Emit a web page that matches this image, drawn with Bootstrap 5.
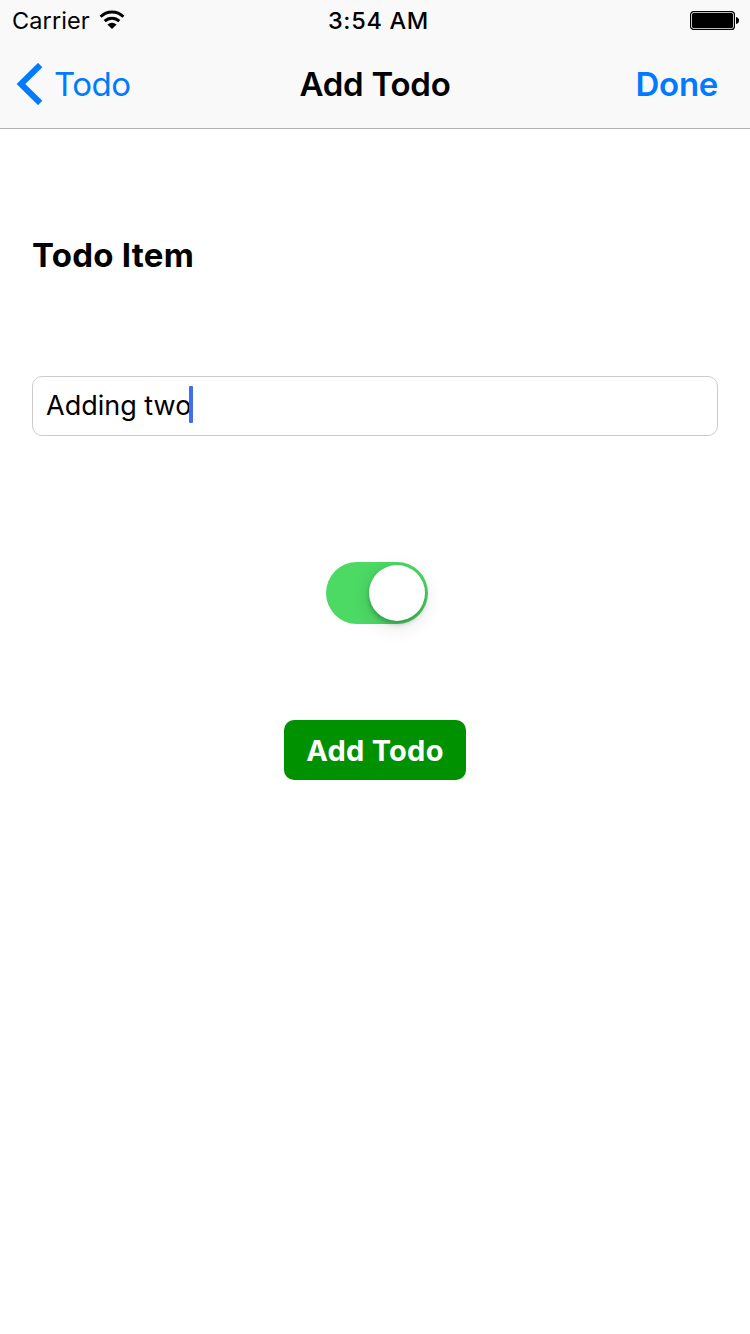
<!DOCTYPE html>
<html lang="en">
<head>
<meta charset="utf-8">
<meta name="viewport" content="width=device-width, initial-scale=1">
<title>Add Todo</title>
<link rel="stylesheet" href="https://cdn.jsdelivr.net/npm/bootstrap@5.3.0/dist/css/bootstrap.min.css">
<style>
body{font-family:Inter,"Liberation Sans",sans-serif;color:#000;background:#fff;line-height:1;min-height:1334px}
.top-area{height:129px;background:#f9f9f9;border-bottom:1px solid #b2b2b2}
.status-bar{height:40px;font-size:23.5px;padding:0 11px 0 12px}
.status-bar>*,.title-bar>*{flex:1 1 0;white-space:nowrap}
.carrier{letter-spacing:.1px;padding-top:2px}
.clock{font-weight:500;letter-spacing:.7px;padding:2px 0 0 6px}
.wifi{margin-left:9px}
.title-bar{height:88px;font-size:33px;padding:0 32px 0 16px}
.ios-link{color:#007aff;text-decoration:none}
.back-label{margin-left:11px;letter-spacing:-.5px}
.screen-title{font-size:33px;font-weight:600;letter-spacing:-.25px;padding:2px 0 0 16px}
.done{font-weight:600;letter-spacing:-.3px}
.content{padding:106px 32px 0}
.item-label{font-size:33px;line-height:40px;font-weight:700;margin:0 0 101px;letter-spacing:.25px}
.todo-input{height:60px;border:1px solid #ccc;border-radius:10px;padding:0 13px;font-size:27px;color:#000}
.caret{width:4px;height:37px;border-radius:1px;background:#416ced;margin-left:-2px;margin-top:-3px}
.ios-switch{width:102px;height:62px;border-radius:31px;background:#4cd964;padding:3px;margin:126px 0 96px 4px}
.knob{width:56px;height:56px;border-radius:50%;background:#fff;box-shadow:0 3px 5px rgba(0,0,0,.24),0 5px 20px rgba(0,0,0,.12)}
.add-btn{width:182px;height:60px;border-radius:10px;background:#009100!important;color:#fff!important;font-size:29px;font-weight:700;padding:1px 0 0;border:0;line-height:60px;letter-spacing:.25px}
</style>
</head>
<body>
<header class="top-area">
  <div class="status-bar d-flex align-items-center">
    <div class="d-flex align-items-center"><span class="carrier">Carrier</span>
      <svg class="wifi" width="26" height="20" viewBox="0 0 26 20"><g fill="none" stroke="#000" stroke-width="3"><path d="M1.600 6.800A16.200 16.200 0 0 1 24.400 6.800"/><path d="M5.700 11.100A10.500 10.500 0 0 1 20.300 11.100"/></g><path d="M8.400 14.500Q13 10.900 17.600 14.500L13 19Z"/></svg>
    </div>
    <div class="clock text-center">3:54 AM</div>
    <div class="text-end"><svg class="d-block ms-auto" width="49" height="19" viewBox="0 0 49 19"><rect x=".6" y=".6" width="43.8" height="17.8" rx="3" fill="#fff" stroke="#000" stroke-width="1.2"/><rect x="2" y="2" width="41" height="15" rx="1.5"/><path d="M46 6q3 .5 3 3.500t-3 3.500z"/></svg></div>
  </div>
  <nav class="title-bar d-flex align-items-center">
    <a class="ios-link d-flex align-items-center" href="#">
      <svg width="27" height="42" viewBox="0 0 27 42"><path d="M24.200 2L4.900 21L24.200 40" fill="none" stroke="#007aff" stroke-width="6"/></svg>
      <span class="back-label">Todo</span></a>
    <h1 class="screen-title text-center m-0">Add Todo</h1>
    <a class="ios-link done text-end" href="#"><span>Done</span></a>
  </nav>
</header>
<main class="content">
  <h2 class="item-label">Todo Item</h2>
  <div class="todo-input form-control d-flex align-items-center" role="textbox"><span class="entry">Adding two</span><span class="caret"></span></div>
  <div class="d-flex flex-column align-items-center">
    <div class="ios-switch d-flex justify-content-end" role="switch" aria-checked="true"><span class="knob"></span></div>
    <button class="add-btn btn" type="button"><span>Add Todo</span></button>
  </div>
</main>
<script src="https://cdn.jsdelivr.net/npm/bootstrap@5.3.0/dist/js/bootstrap.bundle.min.js"></script>
</body>
</html>
